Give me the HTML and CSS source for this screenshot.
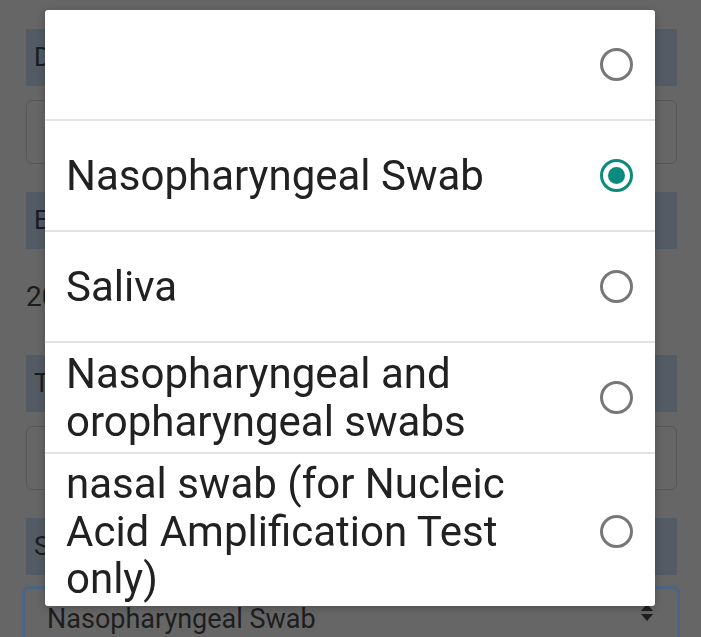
FILE: index.html
```html
<!doctype html>
<html lang="en">
  <head>
    <meta charset="utf-8">
    <title>Specimen type</title>
    <link rel="stylesheet" href="styles.css">
  </head>
  <body>

    <!--page behind the dialog (dimmed)-->
    <div class="form">
      <div class="field-label">Date of test</div>
      <div class="field-input"></div>

      <div class="field-label gap-top">Expiry date</div>
      <p class="field-value">2021-05-14</p>

      <div class="field-label">Test name</div>
      <div class="field-input"></div>

      <div class="field-label gap-top">Specimen type</div>
      <div class="field-select">
        <span>Nasopharyngeal Swab</span>
        <span class="select-arrows"></span>
      </div>
    </div>

    <!--picker dialog-->
    <div class="picker">
      <ul class="options">
        <li class="option">
          <span class="option-text"></span>
          <span class="radio"></span>
        </li>
        <li class="option">
          <span class="option-text">Nasopharyngeal Swab</span>
          <span class="radio checked"></span>
        </li>
        <li class="option">
          <span class="option-text">Saliva</span>
          <span class="radio"></span>
        </li>
        <li class="option">
          <span class="option-text">Nasopharyngeal and oropharyngeal swabs</span>
          <span class="radio"></span>
        </li>
        <li class="option">
          <span class="option-text">nasal swab (for Nucleic Acid Amplification Test only)</span>
          <span class="radio"></span>
        </li>
      </ul>
    </div>

  </body>
</html>
```

FILE: styles.css
```css
body {
  margin: 0;
  background-color: #666;
  font-family: Roboto, "Noto Sans", sans-serif;
  overflow: hidden;
}
/* dimmed form */
.form {
  padding: 29px 24px 0 26px;
}
.field-label {
  height: 57px;
  padding-left: 8px;
  background-color: #535b64;
  color: #1a1d20;
  font-size: 26px;
  line-height: 57px;
}
.gap-top {
  margin-top: 28px;
}
.field-input {
  height: 62px;
  margin-top: 14px;
  border: 1px solid #575757;
  border-radius: 6px;
}
.field-value {
  margin: 0;
  height: 106px;
  color: #1c1c1c;
  font-size: 28px;
  line-height: 95px;
}
.field-select {
  display: flex;
  justify-content: space-between;
  align-items: center;
  height: 60px;
  margin: 11px -3px 0 -4px;
  padding: 0 24px 0 22px;
  border: 3px solid #4c6582;
  border-radius: 7px;
  color: #1e1e1e;
  font-size: 27px;
}
.select-arrows {
  position: relative;
  width: 12px;
  height: 20px;
  margin-top: -14px;
}
.select-arrows::before,
.select-arrows::after {
  content: '';
  position: absolute;
  left: 0;
  border: 6px solid transparent;
}
.select-arrows::before {
  top: -4px;
  border-bottom: 7px solid #1e1e1e;
}
.select-arrows::after {
  top: 12px;
  border-top: 7px solid #1e1e1e;
}
/* picker dialog, over the form */
.picker {
  position: fixed;
  top: 10px;
  left: 45px;
  width: 610px;
  height: 596px;
  overflow: hidden;
  background-color: #fff;
  border-radius: 3px;
  box-shadow: 0 2px 8px rgba(0, 0, 0, 0.25);
}
.options {
  margin: 0;
  padding: 0;
  list-style: none;
}
.option {
  display: flex;
  align-items: center;
  gap: 70px;
  min-height: 111px;
  box-sizing: border-box;
  padding: 6px 22px 6px 21px;
  border-bottom: 2px solid #e3e3e3;
}
.option:last-child {
  border-bottom: 0;
}
.option-text {
  flex: 1;
  color: #212121;
  font-size: 42px;
  line-height: 47.5px;
}
.radio {
  position: relative;
  flex: none;
  width: 27px;
  height: 27px;
  border: 3px solid #777;
  border-radius: 50%;
}
.radio.checked {
  border-color: #0c8a7b;
}
.radio.checked::after {
  content: '';
  position: absolute;
  top: 5px;
  left: 5px;
  width: 17px;
  height: 17px;
  border-radius: 50%;
  background-color: #0c8a7b;
}
```
